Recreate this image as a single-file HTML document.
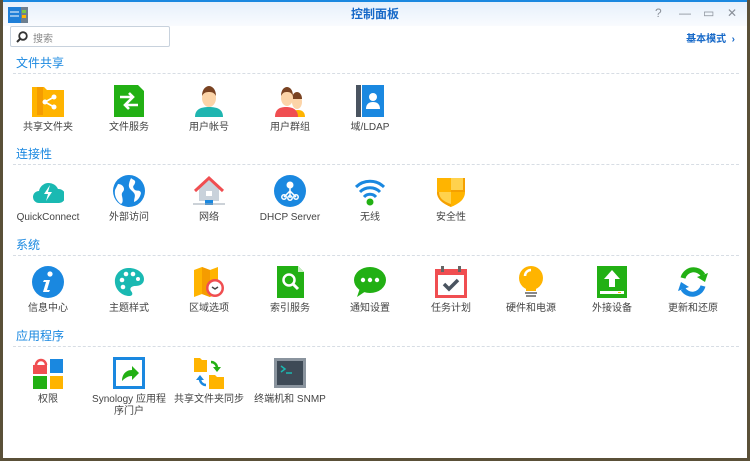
<!DOCTYPE html>
<html><head><meta charset="utf-8"><style>
*{margin:0;padding:0;box-sizing:border-box}
body{width:750px;height:461px;background:#5a5038;font-family:"Liberation Sans","Noto Sans CJK SC",sans-serif;position:relative;overflow:hidden}
#win{position:absolute;left:3px;top:0;width:744px;height:458px;background:#fff;border-top:2px solid #1a88e0}
#tb{position:absolute;left:0;top:0;width:100%;height:24px;background:linear-gradient(#e6f0fb,#f9fbfe)}
.title{position:absolute;left:0;right:0;top:3px;text-align:center;color:#1769c8;font-size:12px;font-weight:bold}
.ctl{position:absolute;top:4px;color:#8a9099;font-size:12px}
#search{position:absolute;left:7px;top:24px;width:160px;height:21px;border:1px solid #c8d2dd;border-radius:2px;background:#fff}
#search span{position:absolute;left:22px;top:3px;font-size:10px;color:#888}
.basic{position:absolute;right:12px;top:28px;color:#1769c8;font-size:10px;font-weight:bold}
.sec{position:absolute;left:13px;font-size:12px;color:#1a88e0}
.line{position:absolute;left:10px;right:8px;border-top:1px dashed #d7dde4}
.it{position:absolute;width:80px;text-align:center;font-size:10px;color:#444;line-height:12px}
.it svg{display:block;margin:0 auto 5px;width:32px;height:32px}
</style></head><body><div id="win">
<div id="tb">
<svg style="position:absolute;left:5px;top:5px" width="20" height="16"><rect x="0" y="0" width="13" height="16" fill="#1e7fd8"/><rect x="13" y="0" width="7" height="16" fill="#6d7f8f"/><rect x="14" y="3" width="4" height="3" fill="#7ac943"/><rect x="14" y="8" width="4" height="3" fill="#ffb400"/><line x1="2" y1="5" x2="11" y2="5" stroke="#fff"/><line x1="2" y1="9" x2="11" y2="9" stroke="#fff"/></svg>
<div class="title">控制面板</div>
<div class="ctl" style="left:652px">?</div>
<div class="ctl" style="left:676px">—</div>
<div class="ctl" style="left:700px">▭</div>
<div class="ctl" style="left:724px">✕</div>
</div>
<div id="search"><svg style="position:absolute;left:5px;top:4px" width="12" height="12"><circle cx="7" cy="5" r="3.8" fill="none" stroke="#333" stroke-width="1.8"/><line x1="4" y1="8" x2="1" y2="11" stroke="#333" stroke-width="2"/></svg><span>搜索</span></div>
<div class="basic">基本模式 &nbsp;›</div>

<div class="sec" style="top:52px">文件共享</div><div class="line" style="top:71px"></div>
<div class="sec" style="top:143px">连接性</div><div class="line" style="top:162px"></div>
<div class="sec" style="top:234px">系统</div><div class="line" style="top:253px"></div>
<div class="sec" style="top:325px">应用程序</div><div class="line" style="top:344px"></div>

<!-- row1 -->
<div class="it" style="left:5px;top:83px"><svg viewBox="0 0 32 32"><path d="M0 2h12l3 3h17v27H0z" fill="#ffb400"/><rect x="5" y="2" width="6" height="28" fill="#f59c00"/><circle cx="13" cy="17" r="2.5" fill="#fff"/><circle cx="22" cy="12" r="2.5" fill="#fff"/><circle cx="22" cy="22" r="2.5" fill="#fff"/><path d="M13 17L22 12M13 17L22 22" stroke="#fff" stroke-width="1.6"/></svg>共享文件夹</div>
<div class="it" style="left:86px;top:83px"><svg viewBox="0 0 32 32"><path d="M1 0h24l6 6v26H1z" fill="#22b014"/><path d="M7 12h13M16 8l4 4-4 4M25 20H12M16 16l-4 4 4 4" stroke="#fff" stroke-width="2.6" fill="none"/></svg>文件服务</div>
<div class="it" style="left:166px;top:83px"><svg viewBox="0 0 32 32"><path d="M2 32c0-8 6-10 14-10s14 2 14 10z" fill="#1fb5b0"/><ellipse cx="16" cy="13" rx="7" ry="9" fill="#fcd4a8"/><path d="M9 11c0-7 4-10 7-10s7 3 7 10c-2-4-5-4-7-4s-5 0-7 4z" fill="#7a4322"/></svg>用户帐号</div>
<div class="it" style="left:247px;top:83px"><svg viewBox="0 0 32 32"><ellipse cx="23" cy="17" rx="5" ry="7" fill="#fcd4a8"/><path d="M18 14c0-5 3-7 5-7s5 2 5 7z" fill="#7a4322"/><path d="M16 32c0-5 4-7 8-7s7 2 7 7z" fill="#ffb400"/><path d="M1 32c0-8 5-10 11-10s12 2 12 10z" fill="#f04e51"/><ellipse cx="13" cy="13" rx="6" ry="8" fill="#fcd4a8"/><path d="M7 11c0-6 3-9 6-9s6 3 6 9c-2-4-4-4-6-4s-4 0-6 4z" fill="#7a4322"/></svg>用户群组</div>
<div class="it" style="left:327px;top:83px"><svg viewBox="0 0 32 32"><rect x="2" y="0" width="5" height="32" fill="#4a5460"/><rect x="8" y="0" width="22" height="32" fill="#1a88e0"/><circle cx="19" cy="12" r="4" fill="#fff"/><path d="M12 24c0-5 3-7 7-7s7 2 7 7z" fill="#fff"/></svg>域/LDAP</div>
<!-- row2 -->
<div class="it" style="left:5px;top:173px"><svg viewBox="0 0 32 32"><path d="M7 28a6 6 0 010-12 10 10 0 0119-2 7 7 0 011 14z" fill="#1ab9b2"/><path d="M18 10l-6 9h4l-2 7 6-9h-4z" fill="#fff"/></svg>QuickConnect</div>
<div class="it" style="left:86px;top:173px"><svg viewBox="0 0 32 32"><circle cx="16" cy="16" r="16" fill="#1a88e0"/><path d="M5 9c3 0 6 2 6 5s-3 3-2 7 1 7-1 8c-4-3-7-8-6-14z M18 3c2 2 5 2 4 5s-3 3-1 6 6 0 7 4c-1 5-4 8-7 9 0-4 2-6 0-9s-6-4-5-9 2-5 2-6z" fill="#fff"/></svg>外部访问</div>
<div class="it" style="left:166px;top:173px"><svg viewBox="0 0 32 32"><path d="M6 14v12h20V14L16 5z" fill="#c9d2db"/><path d="M2 16L16 3l14 13" stroke="#f04e51" stroke-width="3" fill="none"/><rect x="13" y="16" width="6" height="5" fill="#fff"/><rect x="12" y="25" width="8" height="5" fill="#1a88e0"/><line x1="0" y1="29" x2="32" y2="29" stroke="#9aa6b2"/></svg>网络</div>
<div class="it" style="left:247px;top:173px"><svg viewBox="0 0 32 32"><circle cx="16" cy="16" r="16" fill="#1a88e0"/><circle cx="16" cy="10" r="3.5" fill="#fff"/><path d="M16 10v13M16 16l-6 6M16 16l6 6" stroke="#fff" stroke-width="1.5"/><circle cx="10" cy="22" r="2.2" fill="none" stroke="#fff" stroke-width="1.5"/><circle cx="16" cy="23" r="2.2" fill="none" stroke="#fff" stroke-width="1.5"/><circle cx="22" cy="22" r="2.2" fill="none" stroke="#fff" stroke-width="1.5"/></svg>DHCP Server</div>
<div class="it" style="left:327px;top:173px"><svg viewBox="0 0 32 32"><path d="M2 12a20 20 0 0128 0M6 17a14 14 0 0120 0M10 22a8 8 0 0112 0" stroke="#1a88e0" stroke-width="3" fill="none"/><circle cx="16" cy="27" r="3.5" fill="#22b014"/></svg>无线</div>
<div class="it" style="left:408px;top:173px"><svg viewBox="0 0 32 32"><path d="M2 3h28v14c0 8-7 12-14 15C9 29 2 25 2 17z" fill="#ffb400"/><path d="M16 3h14v14H16z M2 17h14v15C9 29 2 25 2 17z" fill="#f5a000"/><path d="M16 3h12v12H16zM4 17h12v12C10 27 4 24 4 17z" fill="#ffd24d"/></svg>安全性</div>
<!-- row3 -->
<div class="it" style="left:5px;top:264px"><svg viewBox="0 0 32 32"><circle cx="16" cy="16" r="16" fill="#1a88e0"/><circle cx="18" cy="8" r="2.6" fill="#fff"/><path d="M12 14h6l-3 10h3l-1 2h-6l3-10h-3z" fill="#fff"/></svg>信息中心</div>
<div class="it" style="left:86px;top:264px"><svg viewBox="0 0 32 32"><path d="M16 2C7 2 1 9 2 17c1 8 8 13 14 13 4 0 4-3 2-5-2-3 1-5 4-5 5 0 9-2 9-7C31 7 24 2 16 2z" fill="#1ab9b2"/><circle cx="9" cy="14" r="2.3" fill="#fff"/><circle cx="13" cy="8" r="2.3" fill="#fff"/><circle cx="20" cy="8" r="2.3" fill="#fff"/><circle cx="10" cy="21" r="2.3" fill="#fff"/><circle cx="25" cy="13" r="2" fill="#fff"/></svg>主题样式</div>
<div class="it" style="left:166px;top:264px"><svg viewBox="0 0 32 32"><path d="M1 4l8-3 8 3 8-3v27l-8 3-8-3-8 3z" fill="#ffb400"/><path d="M9 1v27l8 3V4z" fill="#f59c00"/><circle cx="22" cy="22" r="9" fill="#f04e51"/><circle cx="22" cy="22" r="6.5" fill="#fff"/><path d="M19 21l3 2 3-2" stroke="#444" stroke-width="1.5" fill="none"/></svg>区域选项</div>
<div class="it" style="left:247px;top:264px"><svg viewBox="0 0 32 32"><path d="M3 0h21l6 6v26H3z" fill="#22b014"/><path d="M24 0v6h6z" fill="#c5efc0"/><circle cx="15" cy="14" r="5.5" fill="none" stroke="#fff" stroke-width="2.5"/><path d="M19 18l5 5" stroke="#fff" stroke-width="3"/></svg>索引服务</div>
<div class="it" style="left:327px;top:264px"><svg viewBox="0 0 32 32"><ellipse cx="16" cy="14" rx="16" ry="13" fill="#22b014"/><path d="M6 22l-3 9 9-6z" fill="#22b014"/><circle cx="9" cy="14" r="2.2" fill="#fff"/><circle cx="16" cy="14" r="2.2" fill="#fff"/><circle cx="23" cy="14" r="2.2" fill="#fff"/></svg>通知设置</div>
<div class="it" style="left:408px;top:264px"><svg viewBox="0 0 32 32"><rect x="0" y="3" width="32" height="29" fill="#f04e51"/><rect x="3" y="9" width="26" height="20" fill="#fff"/><rect x="6" y="0" width="3" height="6" fill="#666"/><rect x="23" y="0" width="3" height="6" fill="#666"/><path d="M9 18l5 5 9-9" stroke="#4a5460" stroke-width="3.5" fill="none"/></svg>任务计划</div>
<div class="it" style="left:488px;top:264px"><svg viewBox="0 0 32 32"><circle cx="16" cy="12" r="12" fill="#ffb400"/><rect x="11" y="21" width="10" height="4" fill="#ffb400"/><path d="M10 10a6 6 0 016-6" stroke="#fff" stroke-width="2.5" fill="none"/><rect x="10" y="26" width="12" height="2" fill="#888"/><rect x="11" y="29" width="10" height="2" fill="#888"/></svg>硬件和电源</div>
<div class="it" style="left:569px;top:264px"><svg viewBox="0 0 32 32"><rect x="1" y="0" width="30" height="32" fill="#22b014"/><path d="M16 4l-8 9h5v8h6v-8h5z" fill="#fff"/><rect x="4" y="25" width="24" height="3" fill="#fff"/><rect x="22" y="26" width="3" height="1" fill="#ffb400"/></svg>外接设备</div>
<div class="it" style="left:650px;top:264px"><svg viewBox="0 0 32 32"><path d="M6 12a11 11 0 0120-3" stroke="#22b014" stroke-width="5" fill="none"/><path d="M31 7l-3 9-8-5z" fill="#22b014"/><path d="M26 20a11 11 0 01-20 3" stroke="#1a88e0" stroke-width="5" fill="none"/><path d="M1 25l3-9 8 5z" fill="#1a88e0"/></svg>更新和还原</div>
<!-- row4 -->
<div class="it" style="left:5px;top:355px"><svg viewBox="0 0 32 32"><path d="M4 8a5 5 0 0110 0" stroke="#f04e51" stroke-width="2.5" fill="none"/><rect x="1" y="8" width="14" height="9" fill="#f04e51"/><rect x="18" y="2" width="13" height="14" fill="#1a88e0"/><rect x="1" y="19" width="14" height="13" fill="#22b014"/><rect x="18" y="19" width="13" height="13" fill="#ffb400"/></svg>权限</div>
<div class="it" style="left:86px;top:355px"><svg viewBox="0 0 32 32"><rect x="0" y="0" width="32" height="32" fill="#1a88e0"/><rect x="3" y="3" width="26" height="26" fill="#fff"/><path d="M9 24c0-7 4-11 10-11v-4l7 7-7 7v-4c-4 0-7 2-10 5z" fill="#22b014"/></svg>Synology 应用程<br>序门户</div>
<div class="it" style="left:166px;top:355px"><svg viewBox="0 0 32 32"><path d="M1 1h6l2 2h5v12H1z" fill="#ffb400"/><path d="M16 18h6l2 2h7v12H16z" fill="#ffb400"/><path d="M18 5a6 6 0 016 6" stroke="#22b014" stroke-width="2.5" fill="none"/><path d="M20 10h8l-4 5z" fill="#22b014"/><path d="M13 28a6 6 0 01-6-6" stroke="#1a88e0" stroke-width="2.5" fill="none"/><path d="M3 23l4-5 4 5z" fill="#1a88e0"/></svg>共享文件夹同步</div>
<div class="it" style="left:247px;top:355px"><svg viewBox="0 0 32 32"><rect x="0" y="1" width="32" height="30" fill="#8a949e"/><rect x="3" y="4" width="26" height="24" fill="#3e4a56"/><path d="M7 9l4 3-4 3" stroke="#1ab9b2" stroke-width="1.5" fill="none"/><line x1="12" y1="16" x2="18" y2="16" stroke="#1ab9b2" stroke-width="1.5"/></svg>终端机和 SNMP</div>
</div></body></html>
